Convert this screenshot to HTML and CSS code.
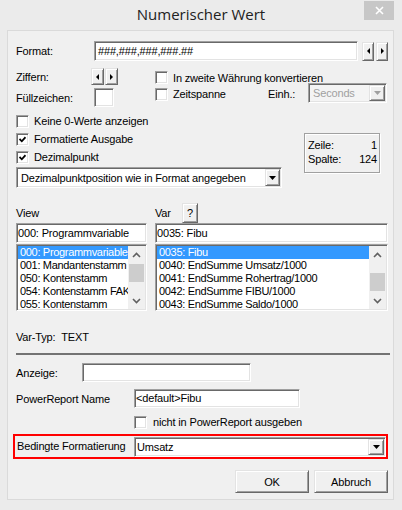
FILE: index.html
```html
<!DOCTYPE html>
<html lang="de">
<head>
<meta charset="utf-8">
<title>Numerischer Wert</title>
<link rel="stylesheet" href="styles.css">
</head>
<body>
<div class="window">
  <header class="titlebar">
    <div></div>
    <div class="title">Numerischer Wert</div>
    <div class="close"><svg width="9" height="9" viewBox="0 0 9 9"><path d="M1 1L8 8M8 1L1 8" stroke="#fff" stroke-width="1.6"/></svg></div>
  </header>
  <main class="client">
    <div class="row r-format">
      <span class="lbl l-78">Format:</span>
      <div class="edit e-format">###,###,###,###.##</div>
      <div class="spin s-format">
        <div class="btn3d sbtn"><i class="tri-l"></i></div>
        <div class="btn3d sbtn"><i class="tri-r"></i></div>
      </div>
    </div>

    <div class="opts">
      <div class="opts-left">
        <div class="row r-zif">
          <span class="lbl l-75">Ziffern:</span>
          <div class="spin s-zif">
            <div class="btn3d sbtn"><i class="tri-l"></i></div>
            <div class="btn3d sbtn"><i class="tri-r"></i></div>
          </div>
        </div>
        <div class="row r-fill">
          <span class="lbl l-78">Füllzeichen:</span>
          <div class="edit e-fill"></div>
        </div>
      </div>
      <div class="opts-right">
        <div class="row r-conv"><span class="chk"></span><span>In zweite Währung konvertieren</span></div>
        <div class="row r-zeit">
          <div class="row c-zeit"><span class="chk"></span><span>Zeitspanne</span></div>
          <span class="lbl l-einh">Einh.:</span>
          <div class="combo cb-sec disabled">
            <span class="cb-text">Seconds</span>
            <span class="btn3d drop"><svg width="7" height="4" viewBox="0 0 7 4"><path d="M0 0H7L3.5 4Z" fill="#a0a0a0"/></svg></span>
          </div>
        </div>
      </div>
    </div>

    <div class="row r-chk r-keine"><span class="chk"></span><span>Keine 0-Werte anzeigen</span></div>

    <div class="fmt">
      <div class="fmt-left">
        <div class="row r-chk r-form"><span class="chk"><svg width="7" height="7" viewBox="0 0 7 7"><path d="M0.5 3L2.8 5.3L6.5 1.2" fill="none" stroke="#000" stroke-width="1.8"/></svg></span><span>Formatierte Ausgabe</span></div>
        <div class="row r-chk r-dez"><span class="chk"><svg width="7" height="7" viewBox="0 0 7 7"><path d="M0.5 3L2.8 5.3L6.5 1.2" fill="none" stroke="#000" stroke-width="1.8"/></svg></span><span>Dezimalpunkt</span></div>
        <div class="combo cb-dez">
          <span class="cb-text">Dezimalpunktposition wie in Format angegeben</span>
          <span class="btn3d drop"><svg width="7" height="4" viewBox="0 0 7 4"><path d="M0 0H7L3.5 4Z" fill="#000"/></svg></span>
        </div>
      </div>
      <div class="pos">
        <div class="pos-line"><span>Zeile:</span><span>1</span></div>
        <div class="pos-line"><span>Spalte:</span><span>124</span></div>
      </div>
    </div>

    <div class="pick">
      <div class="col">
        <div class="row col-head"><span>View</span></div>
        <div class="edit e-pick">000: Programmvariable</div>
        <div class="list">
          <ul class="items">
            <li class="sel">000: Programmvariable</li>
            <li>001: Mandantenstamm</li>
            <li>050: Kontenstamm</li>
            <li>054: Kontenstamm FAK</li>
            <li>055: Kontenstamm</li>
          </ul>
          <div class="sb">
            <div class="sb-btn"><svg width="9" height="6" viewBox="0 0 9 6"><path d="M1 5L4.5 1.5L8 5" fill="none" stroke="#606060" stroke-width="1.6"/></svg></div>
            <div class="sb-track"><div class="thumb t-view"></div></div>
            <div class="sb-btn"><svg width="9" height="6" viewBox="0 0 9 6"><path d="M1 1L4.5 4.5L8 1" fill="none" stroke="#606060" stroke-width="1.6"/></svg></div>
          </div>
        </div>
      </div>
      <div class="col">
        <div class="row col-head"><span class="l-var">Var</span><div class="btn3d qbtn">?</div></div>
        <div class="edit e-pick">0035: Fibu</div>
        <div class="list">
          <ul class="items">
            <li class="sel">0035: Fibu</li>
            <li>0040: EndSumme Umsatz/1000</li>
            <li>0041: EndSumme Rohertrag/1000</li>
            <li>0042: EndSumme FIBU/1000</li>
            <li>0043: EndSumme Saldo/1000</li>
          </ul>
          <div class="sb">
            <div class="sb-btn"><svg width="9" height="6" viewBox="0 0 9 6"><path d="M1 5L4.5 1.5L8 5" fill="none" stroke="#606060" stroke-width="1.6"/></svg></div>
            <div class="sb-track"><div class="thumb t-var"></div></div>
            <div class="sb-btn"><svg width="9" height="6" viewBox="0 0 9 6"><path d="M1 1L4.5 4.5L8 1" fill="none" stroke="#606060" stroke-width="1.6"/></svg></div>
          </div>
        </div>
      </div>
    </div>

    <div class="row r-typ"><span>Var-Typ:&nbsp;&nbsp;TEXT</span></div>
    <div class="sep"></div>

    <div class="row r-anz">
      <span class="lbl l-66">Anzeige:</span>
      <div class="edit e-anz"></div>
    </div>
    <div class="row r-pr">
      <span class="lbl l-118">PowerReport Name</span>
      <div class="edit e-pr">&lt;default&gt;Fibu</div>
    </div>
    <div class="row r-chk r-nicht"><span class="chk"></span><span>nicht in PowerReport ausgeben</span></div>

    <div class="row r-bed">
      <span class="lbl">Bedingte Formatierung</span>
      <div class="combo cb-bed">
        <span class="cb-text">Umsatz</span>
        <span class="btn3d drop"><svg width="7" height="4" viewBox="0 0 7 4"><path d="M0 0H7L3.5 4Z" fill="#000"/></svg></span>
      </div>
    </div>

    <div class="row r-btns">
      <div class="btn3d pbtn">OK</div>
      <div class="btn3d pbtn">Abbruch</div>
    </div>
  </main>
</div>
</body>
</html>
```

FILE: styles.css
```css
* { box-sizing: border-box; }
html, body { margin: 0; padding: 0; }
body {
  width: 402px;
  height: 510px;
  overflow: hidden;
  background: #ebebeb;
  font-family: "Liberation Sans", Arial, sans-serif;
  font-size: 11px;
  letter-spacing: -0.16px;
  color: #000;
}
.window { height: 510px; display: flex; flex-direction: column; }

/* title bar */
.titlebar {
  height: 30px;
  flex: none;
  display: grid;
  grid-template-columns: 1fr auto 1fr;
}
.title {
  font-family: "Open Sans", "Noto Sans", sans-serif;
  font-size: 15px;
  letter-spacing: 0;
  line-height: 29px;
  color: #222;
}
.close {
  justify-self: end;
  width: 30px;
  height: 19px;
  margin: 1px 8px 0 0;
  background: #c7c7c7;
  display: flex;
  align-items: center;
  justify-content: center;
}

/* client */
.client {
  margin: 0 8px 0 7px;
  height: 470px;
  border: 1px solid #dadada;
  background: #f0f0f0;
  padding-left: 8px;
}

.row { display: flex; align-items: center; }
.lbl { flex: none; white-space: nowrap; }
.l-75 { width: 75px; }
.l-78 { width: 78px; }
.l-66 { width: 66px; }
.l-118 { width: 118px; }

/* 3D primitives */
.edit {
  background: #fff;
  border: 1px solid;
  border-color: #a0a0a0 #fff #fff #a0a0a0;
  box-shadow: inset 1px 1px 0 #696969, inset -1px -1px 0 #e3e3e3;
  white-space: nowrap;
  overflow: hidden;
}
.btn3d {
  background: #f0f0f0;
  border: 1px solid;
  border-color: #e3e3e3 #696969 #696969 #e3e3e3;
  box-shadow: inset 1px 1px 0 #fff, inset -1px -1px 0 #a0a0a0;
  display: flex;
  align-items: center;
  justify-content: center;
}
.chk {
  flex: none;
  width: 13px;
  height: 13px;
  background: #fff;
  border: 1px solid;
  border-color: #a0a0a0 #fff #fff #a0a0a0;
  box-shadow: inset 1px 1px 0 #696969, inset -1px -1px 0 #e3e3e3;
  display: flex;
  align-items: center;
  justify-content: center;
  margin-right: 5px;
}
.chk svg { display: block; }

.tri-l, .tri-r { width: 0; height: 0; border-top: 3px solid transparent; border-bottom: 3px solid transparent; }
.tri-l { border-right: 3px solid #000; }
.tri-r { border-left: 3px solid #000; }

/* format row */
.r-format { margin-top: 10px; height: 20px; }
.e-format { width: 264px; height: 20px; line-height: 18px; padding-left: 3px; }
.spin { display: flex; }
.s-format { margin-left: 4px; gap: 2px; }
.s-format .sbtn { width: 12px; height: 19px; }
.s-zif { gap: 1px; }
.s-zif .sbtn { width: 13px; height: 17px; }

/* options */
.opts { display: flex; margin-top: 7px; }
.opts-left { width: 139px; flex: none; }
.r-zif { height: 17px; }
.r-fill { margin-top: 3px; height: 19px; }
.e-fill { width: 20px; height: 19px; }
.opts-right { flex: 1; }
.r-conv { height: 17px; margin-top: 1px; }
.r-zeit { height: 20px; margin-top: -3px; }
.c-zeit { width: 113px; flex: none; padding-top: 2px; }
.l-einh { width: 40px; padding-top: 1px; }

/* combos */
.combo {
  display: flex;
  background: #fff;
  border: 1px solid;
  border-color: #a0a0a0 #fff #fff #a0a0a0;
  box-shadow: inset 1px 1px 0 #696969, inset -1px -1px 0 #e3e3e3;
  padding: 1px;
}
.cb-text { flex: 1; white-space: nowrap; overflow: hidden; display: flex; align-items: center; }
.drop { width: 16px; flex: none; }
.drop svg { display: block; }
.cb-sec { width: 79px; height: 20px; }
.cb-sec .cb-text { padding-left: 3px; }
.combo.disabled { background: #f4f4f4; color: #a0a0a0; }

.r-chk { height: 14px; }
.r-keine { margin-top: 7px; }

.fmt { display: flex; align-items: flex-start; }
.fmt-left { width: 266px; flex: none; }
.r-form { margin-top: 4px; }
.r-dez { margin-top: 4px; }
.cb-dez { margin-top: 3px; height: 21px; }
.cb-dez .cb-text { padding-left: 3px; }
.cb-dez .drop { width: 15px; }

.pos {
  margin: 5px 0 0 22px;
  width: 76px;
  height: 40px;
  border: 1px solid #a0a0a0;
  box-shadow: inset 1px 1px 0 #fff, 1px 1px 0 #fff;
  padding: 4px 2px 0 3px;
}
.pos-line { display: flex; justify-content: space-between; line-height: 14px; }

/* view / var pickers */
.pick {
  margin-top: 15px;
  display: grid;
  grid-template-columns: 131px 233px;
  column-gap: 8px;
}
.col { display: flex; flex-direction: column; }
.col-head { height: 20px; }
.l-var { width: 27px; }
.qbtn { width: 16px; height: 20px; font-size: 11px; }
.e-pick { height: 20px; line-height: 18px; padding-left: 1px; }
.list {
  margin-top: 1px;
  height: 67px;
  display: flex;
  background: #fff;
  border: 1px solid;
  border-color: #a0a0a0 #fff #fff #a0a0a0;
  box-shadow: inset 1px 1px 0 #696969, inset -1px -1px 0 #e3e3e3;
  padding: 1px;
  overflow: hidden;
}
.items {
  list-style: none;
  margin: 0;
  padding: 0;
  flex: 1;
  min-width: 0;
  overflow: hidden;
}
.items li { height: 13px; line-height: 13px; padding-left: 2px; letter-spacing: -0.32px; white-space: nowrap; overflow: hidden; }
.items li.sel { background: #3399ff; color: #fff; }
.sb {
  width: 17px;
  flex: none;
  background: #f0f0f0;
  display: flex;
  flex-direction: column;
}
.sb-btn { height: 17px; flex: none; display: flex; align-items: center; justify-content: center; }
.sb-btn svg { display: block; }
.sb-track { flex: 1; }
.thumb { background: #cdcdcd; margin: 0 1px; }
.t-view { margin-top: 1px; height: 18px; }
.t-var { margin-top: 10px; height: 18px; }

/* lower part */
.r-typ { margin-top: 19px; height: 14px; }
.sep { margin-top: 9px; width: 374px; height: 2px; background: #737373; }
.r-anz { margin-top: 8px; height: 19px; }
.e-anz { width: 169px; height: 19px; }
.r-pr { margin-top: 7px; height: 19px; }
.e-pr { width: 166px; height: 19px; line-height: 17px; padding-left: 1px; }
.r-nicht { margin: 7px 0 0 118px; }
.r-nicht .chk { margin-right: 6px; }

.r-bed {
  margin: 5px 0 0 -3px;
  width: 375px;
  height: 25px;
  border: 2px solid #ff0000;
  padding-left: 2px;
  align-items: flex-start;
}
.r-bed .lbl { line-height: 21px; }
.cb-bed { margin: 1px 0 0 auto; width: 252px; height: 20px; }
.cb-bed .cb-text { padding-left: 1px; }

.r-btns { margin-top: 11px; justify-content: flex-end; gap: 5px; padding-right: 5px; }
.pbtn { width: 74px; height: 23px; }
```
